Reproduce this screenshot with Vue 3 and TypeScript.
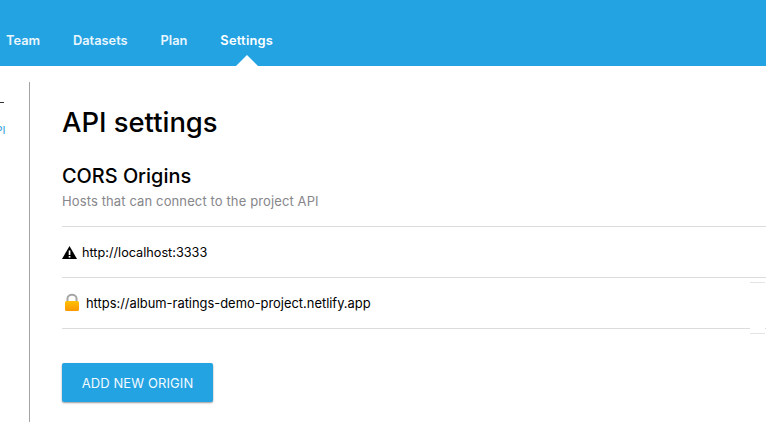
<script setup lang="ts">
const tabs = ['Team', 'Datasets', 'Plan', 'Settings']
</script>

<template>
  <div class="page">
    <header class="topbar">
      <nav class="tabs">
        <a v-for="t in tabs" :key="t" class="tab" :class="{ active: t === 'Settings' }">{{ t }}</a>
      </nav>
    </header>
    <div class="body">
      <aside class="side">
        <div class="side-rule"></div>
        <div class="side-link">API</div>
      </aside>
      <main class="main">
        <h1>API settings</h1>
        <h2>CORS Origins</h2>
        <p class="hint">Hosts that can connect to the project API</p>
        <ul class="origins">
          <li class="origin">
            <svg class="warn" width="15" height="13" viewBox="0 0 15 13">
              <path d="M7.5 0 L15 13 H0 Z" fill="#000" />
              <rect x="6.7" y="4.5" width="1.7" height="4.5" fill="#fff" />
              <rect x="6.7" y="10" width="1.7" height="1.6" fill="#fff" />
            </svg>
            <span>http://localhost:3333</span>
          </li>
          <li class="origin wide">
            <svg class="lock" width="16" height="19" viewBox="0 0 16 19">
              <defs>
                <linearGradient id="lockfill" x1="0" y1="0" x2="0" y2="1">
                  <stop offset="0" stop-color="#ffc107" />
                  <stop offset="1" stop-color="#ff9800" />
                </linearGradient>
              </defs>
              <path d="M3.5 9 V5.5 C3.5 0.5 12.5 0.5 12.5 5.5 V9" fill="none" stroke="#a6a6a6" stroke-width="2" />
              <rect x="1" y="8" width="14" height="10" rx="1.5" fill="url(#lockfill)" />
            </svg>
            <span>https://album-ratings-demo-project.netlify.app</span>
          </li>
        </ul>
        <button class="add">ADD NEW ORIGIN</button>
      </main>
    </div>
    <div class="ghost"></div>
  </div>
</template>

<style>
html, body { margin: 0; background: #fff; overflow: hidden; }
</style>

<style scoped>
.page {
  position: relative;
  width: 766px;
  height: 422px;
  overflow: hidden;
  font-family: Inter, "Liberation Sans", sans-serif;
  color: #000;
  background: #fff;
}
.topbar {
  height: 66px;
  background: #24a3e3;
  display: flex;
  align-items: flex-end;
}
.tabs {
  display: flex;
  gap: 33px;
  padding: 0 0 17px 6px;
}
.tab {
  position: relative;
  color: #e9f6fd;
  font-size: 12.8px;
  font-weight: 600;
  line-height: 16px;
}
.tab.active { color: #fff; letter-spacing: 0.25px; }
.tab.active::after {
  content: "";
  position: absolute;
  left: 50%;
  bottom: -17px;
  margin-left: -11px;
  border-left: 11px solid transparent;
  border-right: 11px solid transparent;
  border-bottom: 11px solid #fff;
}
.body {
  display: flex;
  padding-top: 16px;
  height: 356px;
  box-sizing: border-box;
}
.side {
  width: 29px;
  flex: none;
  border-right: 1px solid #a3a3a3;
  overflow: hidden;
  padding-top: 20px;
}
.side-rule { width: 4px; height: 1px; background: #333; }
.side-link {
  margin-top: 21px;
  margin-left: -12px;
  font-size: 11px;
  line-height: 13px;
  color: #2f9fdc;
}
.main {
  flex: 1;
  min-width: 0;
  padding: 0 0 0 32px;
}
h1 {
  margin: 23px 0 0;
  font-size: 27.4px;
  line-height: 34px;
  font-weight: 500;
}
h2 {
  margin: 25px 0 0;
  font-size: 19.9px;
  line-height: 24px;
  font-weight: 500;
}
.hint {
  margin: 5px 0 0;
  font-size: 13px;
  line-height: 16px;
  letter-spacing: 0.12px;
  color: #86868b;
}
.origins {
  list-style: none;
  margin: 17px 0 0;
  padding: 0;
  border-top: 1px solid #dcdcdc;
}
.origin {
  height: 50px;
  border-bottom: 1px solid #dcdcdc;
  display: flex;
  align-items: center;
  gap: 5px;
  font-size: 12.7px;
}
.origin.wide { font-size: 12.9px; }
.warn { flex: none; }
.lock { flex: none; margin-top: -2px; margin-left: 2px; margin-right: 1px; }
.add {
  display: block;
  margin-top: 34px;
  width: 151px;
  height: 39px;
  border: none;
  border-radius: 2px;
  background: #24a3e3;
  color: #f2fafe;
  font-family: inherit;
  font-size: 13px;
  font-weight: 400;
  letter-spacing: 0.1px;
  box-shadow: 0 1px 2px rgba(0, 0, 0, 0.4);
}
.ghost {
  position: absolute;
  left: 750px;
  top: 282px;
  width: 15px;
  height: 50px;
  background: #fff;
  border-top: 1px solid #e4e4e4;
  border-bottom: 1px solid #e4e4e4;
}
</style>
